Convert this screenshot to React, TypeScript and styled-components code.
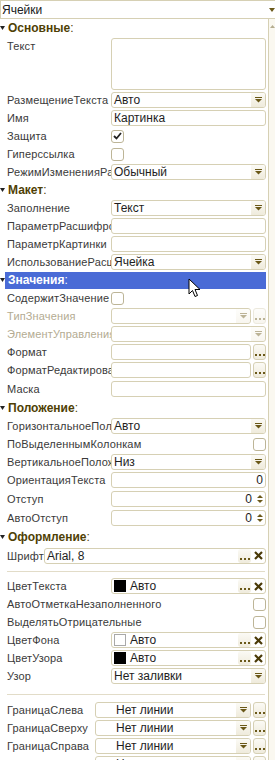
import React from 'react';
import styled, { createGlobalStyle } from 'styled-components';

const GlobalStyle = createGlobalStyle`
  html, body { margin: 0; padding: 0; background: #ffffff; }
  body { font-family: "Liberation Sans", Arial, sans-serif; }
`;

const BORDER = '#d6d0b4';
const OLIVE = '#6a5818';

// Палитра свойств целиком
const Palette = styled.div`
  position: relative;
  width: 275px;
  height: 760px;
  overflow: hidden;
  background: #ffffff;
  font-size: 11px;
  letter-spacing: 0.15px;
  color: #3a3a3a;
`;

const TopCombo = styled.div`
  height: 19px;
  box-sizing: border-box;
  display: flex;
  align-items: center;
  border: 1px solid ${BORDER};
  border-right: none;
  padding-left: 1px;
  font-size: 12px;
  letter-spacing: 0;
  color: #202020;
`;

const TopText = styled.span`
  flex: 1;
`;

const Body = styled.div`
  display: flex;
`;

const Content = styled.div`
  width: 268px;
`;

const ScrollStrip = styled.div`
  flex: 1;
  border-left: 1px solid ${BORDER};
  background: #faf8f0;
  display: flex;
  justify-content: center;
  padding-top: 6px;
  height: 740px;
`;

const GroupHeader = styled.div<{ $gap?: number }>`
  height: 18px;
  margin-top: ${(p) => p.$gap ?? 0}px;
  display: flex;
  align-items: center;
`;

const HeaderBand = styled.div<{ $selected?: boolean }>`
  flex: 1;
  height: 17px;
  margin-right: 2px;
  display: flex;
  align-items: center;
  padding-left: 3px;
  font-weight: bold;
  font-size: 12px;
  letter-spacing: 0;
  color: ${(p) => (p.$selected ? '#ffffff' : '#4f3f05')};
  background: ${(p) => (p.$selected ? '#4a6bd6' : 'transparent')};
`;

const Colon = styled.span`
  font-weight: normal;
`;

const Row = styled.div<{ $h?: number }>`
  height: ${(p) => p.$h ?? 18}px;
  display: flex;
  align-items: ${(p) => (p.$h && p.$h > 30 ? 'flex-start' : 'center')};
  padding-right: 2px;
`;

const Label = styled.div<{ $disabled?: boolean; $w?: number; $top?: boolean }>`
  width: ${(p) => p.$w ?? 104}px;
  flex: ${(p) => (p.$w === 0 ? '1' : 'none')};
  padding-left: 7px;
  padding-top: ${(p) => (p.$top ? 3 : 0)}px;
  white-space: nowrap;
  overflow: hidden;
  color: ${(p) => (p.$disabled ? '#b3ab92' : '#3a3a3a')};
`;

const Field = styled.div<{ $h?: number }>`
  flex: 1;
  height: ${(p) => p.$h ?? 16}px;
  margin-top: ${(p) => (p.$h ? 1 : 0)}px;
  box-sizing: border-box;
  border: 1px solid ${BORDER};
  border-radius: 3px;
  background: #ffffff;
  display: flex;
  align-items: center;
  overflow: hidden;
`;

const Value = styled.span<{ $right?: boolean; $indent?: number }>`
  flex: 1;
  padding-left: ${(p) => p.$indent ?? 2}px;
  padding-right: 2px;
  text-align: ${(p) => (p.$right ? 'right' : 'left')};
  font-size: 12px;
  letter-spacing: 0;
  color: #1e1e1e;
  white-space: nowrap;
`;

const DropBtn = styled.div<{ $disabled?: boolean }>`
  width: 14px;
  height: 100%;
  display: flex;
  align-items: center;
  justify-content: center;
  background: linear-gradient(#fbfaf5, #efebdc);
  opacity: ${(p) => (p.$disabled ? 0.45 : 1)};
`;

const DotsBtn = styled.div<{ $disabled?: boolean; $outside?: boolean }>`
  width: 13px;
  height: ${(p) => (p.$outside ? '16px' : '100%')};
  margin-left: ${(p) => (p.$outside ? 2 : 0)}px;
  box-sizing: border-box;
  border: ${(p) => (p.$outside ? `1px solid ${BORDER}` : 'none')};
  border-radius: 3px;
  display: flex;
  align-items: flex-end;
  justify-content: center;
  padding-bottom: 3px;
  background: linear-gradient(#fbfaf5, #efebdc);
  opacity: ${(p) => (p.$disabled ? 0.45 : 1)};
`;

const ClearBtn = styled.div`
  width: 14px;
  height: 100%;
  display: flex;
  align-items: center;
  justify-content: center;
`;

const SpinBtn = styled.div`
  width: 11px;
  height: 100%;
  display: flex;
  flex-direction: column;
  align-items: center;
  justify-content: center;
  gap: 2px;
`;

const Check = styled.div`
  width: 13px;
  height: 13px;
  box-sizing: border-box;
  border: 1px solid #bdb597;
  border-radius: 3px;
  background: #ffffff;
  display: flex;
  align-items: center;
  justify-content: center;
`;

const Swatch = styled.div<{ $color: string }>`
  width: 12px;
  height: 12px;
  margin-left: 2px;
  box-sizing: border-box;
  border: 1px solid ${(p) => (p.$color === '#000000' ? '#000000' : '#a9a9a9')};
  background: ${(p) => p.$color};
`;

const Separator = styled.div<{ $h: number; $line: number }>`
  height: ${(p) => p.$h}px;
  margin-left: 7px;
  margin-right: 3px;
  box-sizing: border-box;
  padding-top: ${(p) => p.$line}px;
  &::after {
    content: '';
    display: block;
    border-top: 1px solid #e2dcc8;
  }
`;

const Cursor = styled.svg`
  position: absolute;
  left: 188px;
  top: 278px;
`;

// Мелкие рисунки
const Tri = () => (
  <svg width="9" height="6" viewBox="0 0 9 6">
    <rect x="1" y="0" width="7" height="1" fill={OLIVE} />
    <path d="M1 2 H8 L4.5 5.5 Z" fill={OLIVE} />
  </svg>
);

const Dots = () => (
  <svg width="10" height="2" viewBox="0 0 10 2">
    <rect x="0" y="0" width="2" height="2" fill={OLIVE} />
    <rect x="4" y="0" width="2" height="2" fill={OLIVE} />
    <rect x="8" y="0" width="2" height="2" fill={OLIVE} />
  </svg>
);

const Cross = () => (
  <svg width="9" height="9" viewBox="0 0 9 9">
    <path d="M1 1 L8 8 M8 1 L1 8" stroke="#4a3a08" strokeWidth="2.2" />
  </svg>
);

const HeadArrow = () => (
  <svg width="5" height="4" viewBox="0 0 5 4" style={{ flex: 'none' }}>
    <path d="M0 0 H5 L2.5 4 Z" fill="#222" />
  </svg>
);

const Tick = () => (
  <svg width="9" height="8" viewBox="0 0 9 8">
    <path d="M1 4 L3.5 6.5 L8 1" stroke="#222" strokeWidth="1.8" fill="none" />
  </svg>
);

const Spin = () => (
  <SpinBtn>
    <svg width="6" height="3" viewBox="0 0 6 3"><path d="M0 3 H6 L3 0 Z" fill={OLIVE} /></svg>
    <svg width="6" height="3" viewBox="0 0 6 3"><path d="M0 0 H6 L3 3 Z" fill={OLIVE} /></svg>
  </SpinBtn>
);

const Header: React.FC<{ title: string; selected?: boolean; gap?: number }> = ({ title, selected, gap }) => (
  <GroupHeader $gap={gap}>
    <HeadArrow />
    <HeaderBand $selected={selected}>
      {title}
      <Colon>:</Colon>
    </HeaderBand>
  </GroupHeader>
);

const App: React.FC = () => {
  return (
    <Palette>
      <GlobalStyle />
      <TopCombo>
        <TopText>Ячейки</TopText>
        <svg width="6" height="4" viewBox="0 0 6 4">
          <path d="M0 0 H6 L3 4 Z" fill={OLIVE} />
        </svg>
      </TopCombo>
      <Body>
        <Content>
          <Header title="Основные" />
          <Row $h={54}>
            <Label $top>Текст</Label>
            <Field $h={52} />
          </Row>
          <Row>
            <Label>РазмещениеТекста</Label>
            <Field><Value>Авто</Value><DropBtn><Tri /></DropBtn></Field>
          </Row>
          <Row>
            <Label>Имя</Label>
            <Field><Value>Картинка</Value></Field>
          </Row>
          <Row>
            <Label>Защита</Label>
            <Check><Tick /></Check>
          </Row>
          <Row>
            <Label>Гиперссылка</Label>
            <Check />
          </Row>
          <Row>
            <Label>РежимИзмененияРазмера</Label>
            <Field><Value>Обычный</Value><DropBtn><Tri /></DropBtn></Field>
          </Row>

          <Header title="Макет" />
          <Row>
            <Label>Заполнение</Label>
            <Field><Value>Текст</Value><DropBtn><Tri /></DropBtn></Field>
          </Row>
          <Row>
            <Label>ПараметрРасшифровки</Label>
            <Field />
          </Row>
          <Row>
            <Label>ПараметрКартинки</Label>
            <Field />
          </Row>
          <Row>
            <Label>ИспользованиеРасшифровки</Label>
            <Field><Value>Ячейка</Value><DropBtn><Tri /></DropBtn></Field>
          </Row>

          <Header title="Значения" selected />
          <Row>
            <Label>СодержитЗначение</Label>
            <Check />
          </Row>
          <Row>
            <Label $disabled>ТипЗначения</Label>
            <Field><Value /><DropBtn $disabled><Tri /></DropBtn></Field>
            <DotsBtn $outside $disabled><Dots /></DotsBtn>
          </Row>
          <Row>
            <Label $disabled>ЭлементУправления</Label>
            <Field><Value /><DropBtn $disabled><Tri /></DropBtn></Field>
          </Row>
          <Row>
            <Label>Формат</Label>
            <Field />
            <DotsBtn $outside><Dots /></DotsBtn>
          </Row>
          <Row>
            <Label>ФорматРедактирования</Label>
            <Field />
            <DotsBtn $outside><Dots /></DotsBtn>
          </Row>
          <Row $h={19}>
            <Label>Маска</Label>
            <Field />
          </Row>

          <Header title="Положение" gap={1} />
          <Row>
            <Label>ГоризонтальноеПоложение</Label>
            <Field><Value>Авто</Value><DropBtn><Tri /></DropBtn></Field>
          </Row>
          <Row>
            <Label $w={0}>ПоВыделеннымКолонкам</Label>
            <Check />
          </Row>
          <Row>
            <Label>ВертикальноеПоложение</Label>
            <Field><Value>Низ</Value><DropBtn><Tri /></DropBtn></Field>
          </Row>
          <Row>
            <Label>ОриентацияТекста</Label>
            <Field><Value $right>0</Value></Field>
          </Row>
          <Row $h={19}>
            <Label>Отступ</Label>
            <Field><Value $right>0</Value><Spin /></Field>
          </Row>
          <Row $h={19}>
            <Label>АвтоОтступ</Label>
            <Field><Value $right>0</Value><Spin /></Field>
          </Row>

          <Header title="Оформление" gap={1} />
          <Row $h={19}>
            <Label $w={37}>Шрифт</Label>
            <Field><Value>Arial, 8</Value><DotsBtn><Dots /></DotsBtn><ClearBtn><Cross /></ClearBtn></Field>
          </Row>
          <Separator $h={12} $line={6} />
          <Row>
            <Label>ЦветТекста</Label>
            <Field><Swatch $color="#000000" /><Value $indent={4}>Авто</Value><DotsBtn><Dots /></DotsBtn><ClearBtn><Cross /></ClearBtn></Field>
          </Row>
          <Row>
            <Label $w={0}>АвтоОтметкаНезаполненного</Label>
            <Check />
          </Row>
          <Row>
            <Label $w={0}>ВыделятьОтрицательные</Label>
            <Check />
          </Row>
          <Row>
            <Label>ЦветФона</Label>
            <Field><Swatch $color="#ffffff" /><Value $indent={4}>Авто</Value><DotsBtn><Dots /></DotsBtn><ClearBtn><Cross /></ClearBtn></Field>
          </Row>
          <Row>
            <Label>ЦветУзора</Label>
            <Field><Swatch $color="#000000" /><Value $indent={4}>Авто</Value><DotsBtn><Dots /></DotsBtn><ClearBtn><Cross /></ClearBtn></Field>
          </Row>
          <Row>
            <Label>Узор</Label>
            <Field><Value>Нет заливки</Value><DropBtn><Tri /></DropBtn></Field>
          </Row>
          <Separator $h={16} $line={9} />
          <Row>
            <Label $w={88}>ГраницаСлева</Label>
            <Field><Value $indent={20}>Нет линии</Value><DropBtn><Tri /></DropBtn></Field>
            <DotsBtn $outside><Dots /></DotsBtn>
          </Row>
          <Row>
            <Label $w={88}>ГраницаСверху</Label>
            <Field><Value $indent={20}>Нет линии</Value><DropBtn><Tri /></DropBtn></Field>
            <DotsBtn $outside><Dots /></DotsBtn>
          </Row>
          <Row>
            <Label $w={88}>ГраницаСправа</Label>
            <Field><Value $indent={20}>Нет линии</Value><DropBtn><Tri /></DropBtn></Field>
            <DotsBtn $outside><Dots /></DotsBtn>
          </Row>
          <Row>
            <Label $w={88}>ГраницаСнизу</Label>
            <Field><Value $indent={20}>Нет линии</Value><DropBtn><Tri /></DropBtn></Field>
            <DotsBtn $outside><Dots /></DotsBtn>
          </Row>
        </Content>
        <ScrollStrip>
          <svg width="5" height="3" viewBox="0 0 5 3"><path d="M0 3 H5 L2.5 0 Z" fill="#b5ad90" /></svg>
        </ScrollStrip>
      </Body>
      <Cursor width="14" height="20" viewBox="0 0 14 20">
        <path d="M1 1 L1 16 L4.5 12.5 L7 18.5 L9.5 17.5 L7 11.5 L12 11.5 Z" fill="#ffffff" stroke="#000000" strokeWidth="1" />
      </Cursor>
    </Palette>
  );
};

export default App;
